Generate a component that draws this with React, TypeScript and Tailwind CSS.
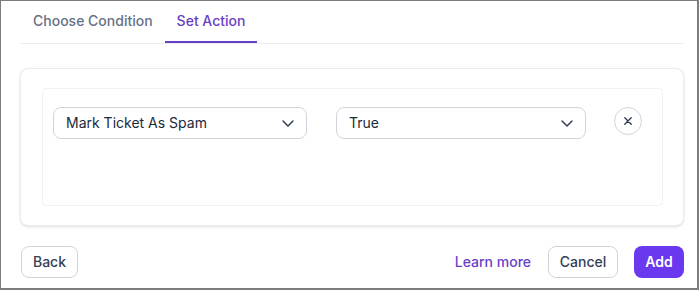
import React from "react";

function Chevron() {
  return (
    <svg width="12" height="7" viewBox="0 0 12 7" fill="none" className="shrink-0">
      <path d="M1 1L6 6L11 1" stroke="#344054" strokeWidth="1.5" strokeLinecap="round" strokeLinejoin="round" />
    </svg>
  );
}

function Select({ label, width }: { label: string; width: string }) {
  return (
    <div
      className={`${width} h-8 flex items-center justify-between pl-3 pr-3 border border-[#d0d5dd] rounded-lg bg-white text-sm leading-5 text-[#1d2939]`}
    >
      <span>{label}</span>
      <Chevron />
    </div>
  );
}

export default function App() {
  return (
    <div className="w-[699px] h-[290px] bg-white border border-[#7d7d7d] border-r-2 border-b-2 flex flex-col pl-[19px] pr-[13px] font-['Inter',sans-serif]">
      <div className="flex border-b border-[#eaecf0] pl-px">
        <div className="px-3 pt-[10px] pb-[10px] border-b-2 border-transparent text-sm leading-5 font-medium text-[#667085]">
          Choose Condition
        </div>
        <div className="px-3 pt-[10px] pb-[10px] border-b-2 border-[#6941c6] text-sm leading-5 font-medium text-[#6941c6]">
          Set Action
        </div>
      </div>

      <div className="mt-6 h-[158px] border border-[#eaecf0] rounded-lg shadow-sm bg-white pl-[21px] pr-5 py-[19px]">
        <div className="h-[118px] border border-[#f0f1f3] rounded bg-white pl-[10px] pr-5 pt-[18px] flex items-start">
          <Select label="Mark Ticket As Spam" width="w-[254px]" />
          <div className="w-[29px] shrink-0" />
          <Select label="True" width="w-[250px]" />
          <div className="w-[28px] shrink-0" />
          <div className="w-7 h-7 rounded-full border border-[#d0d5dd] flex items-center justify-center bg-white">
            <svg width="8" height="8" viewBox="0 0 8 8" fill="none">
              <path d="M0.8 0.8L7.2 7.2M7.2 0.8L0.8 7.2" stroke="#344054" strokeWidth="1.4" strokeLinecap="round" />
            </svg>
          </div>
        </div>
      </div>

      <div className="mt-5 flex items-center pl-px">
        <button className="h-8 w-[57px] rounded-lg border border-[#d0d5dd] bg-white text-sm leading-5 font-medium text-[#344054]">
          Back
        </button>
        <div className="flex-1" />
        <span className="text-sm leading-5 font-medium text-[#6941c6]">Learn more</span>
        <button className="ml-[17px] h-8 w-[70px] rounded-lg border border-[#d0d5dd] bg-white text-sm leading-5 font-medium text-[#344054]">
          Cancel
        </button>
        <button className="ml-4 h-8 w-[50px] rounded-lg bg-[#6938ef] text-sm leading-5 font-semibold text-white">
          Add
        </button>
      </div>
    </div>
  );
}
